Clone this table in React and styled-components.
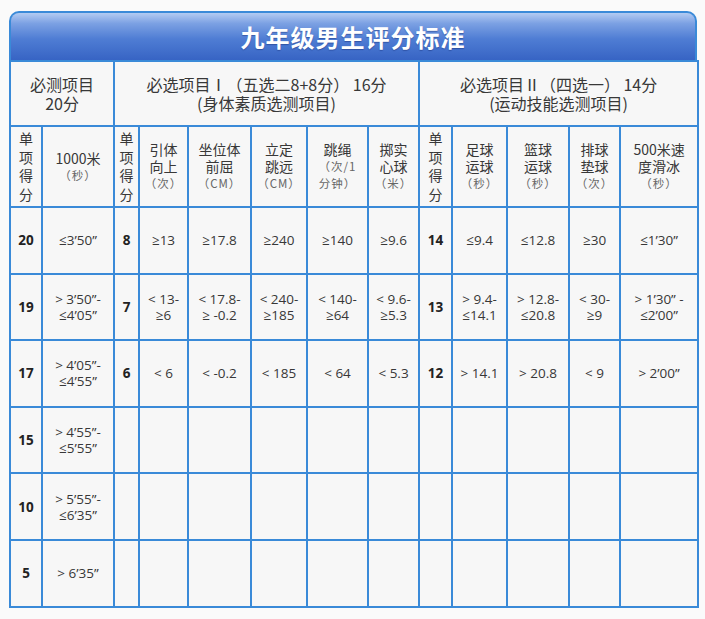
import React from 'react';
import styled, { createGlobalStyle } from 'styled-components';

const GlobalStyle = createGlobalStyle`
    html, body {
        margin: 0;
        padding: 0;
        background: #fafafa;
    }
`;

const LINE = '#3a8ad8';

const cols = [32, 72, 25, 49, 63, 56, 61, 51, 33, 55, 62, 51, 78];

const subHeads = [
    { kind: 'score' },
    { name: ['1000米'], unit: '（秒）' },
    { kind: 'score' },
    { name: ['引体', '向上'], unit: '（次）' },
    { name: ['坐位体', '前屈'], unit: '（CM）' },
    { name: ['立定', '跳远'], unit: '（CM）' },
    { name: ['跳绳'], unit: ['（次/1', '分钟）'] },
    { name: ['掷实', '心球'], unit: '（米）' },
    { kind: 'score' },
    { name: ['足球', '运球'], unit: '（秒）' },
    { name: ['篮球', '运球'], unit: '（秒）' },
    { name: ['排球', '垫球'], unit: '（次）' },
    { name: ['500米速', '度滑冰'], unit: '（秒）' },
];

const rows = [
    ['20', ['≤3’50”'], '8', ['≥13'], ['≥17.8'], ['≥240'], ['≥140'], ['≥9.6'], '14', ['≤9.4'], ['≤12.8'], ['≥30'], ['≤1’30”']],
    ['19', ['> 3’50”-', '≤4’05”'], '7', ['< 13-', '≥6'], ['< 17.8-', '≥ -0.2'], ['< 240-', '≥185'], ['< 140-', '≥64'], ['< 9.6-', '≥5.3'], '13', ['> 9.4-', '≤14.1'], ['> 12.8-', '≤20.8'], ['< 30-', '≥9'], ['> 1’30”  -', '≤2’00”']],
    ['17', ['> 4’05”-', '≤4’55”'], '6', ['< 6'], ['< -0.2'], ['< 185'], ['< 64'], ['< 5.3'], '12', ['> 14.1'], ['> 20.8'], ['< 9'], ['> 2’00”']],
    ['15', ['> 4’55”-', '≤5’55”'], '', [], [], [], [], [], '', [], [], [], []],
    ['10', ['> 5’55”-', '≤6’35”'], '', [], [], [], [], [], '', [], [], [], []],
    ['5', ['> 6’35”'], '', [], [], [], [], [], '', [], [], [], []],
];

const scoreCols = [0, 2, 8];

const Page = styled.div`
    padding: 11px 0 0 9px;
`;

const Card = styled.div`
    width: 688px;
`;

const Title = styled.div`
    height: 47px;
    border: 2px solid ${LINE};
    border-bottom: none;
    border-radius: 10px 10px 0 0;
    background: linear-gradient(to bottom, #b3cbf2 0%, #7ca1e3 22%, #4f7dd4 55%, #3764c4 100%);
    display: flex;
    align-items: center;
    justify-content: center;
    color: #fff;
    font-family: "Noto Sans CJK SC", sans-serif;
    font-weight: 700;
    font-size: 24px;
    letter-spacing: 1px;
    text-shadow: 0 1px 1px rgba(20, 40, 110, 0.45);
`;

const Table = styled.table`
    width: 688px;
    table-layout: fixed;
    border-collapse: collapse;
    background: #f7f7f7;
    color: #383838;
`;

const Cell = styled.td`
    border: 2px solid ${LINE};
    padding: 0;
    text-align: center;
    vertical-align: middle;
    white-space: nowrap;
`;

const GroupHead = styled(Cell)`
    height: 63px;
    font-family: "Noto Sans CJK SC", sans-serif;
    font-size: 16px;
    line-height: 19px;
`;

const SubHead = styled(Cell)`
    height: 77px;
    font-family: "Noto Sans CJK SC", sans-serif;
    font-size: 14px;
    line-height: 17px;
`;

const ScoreHead = styled(SubHead)`
    line-height: 18.5px;
    vertical-align: top;
    padding-top: 2px;
`;

const Unit = styled.div`
    color: #666;
    font-size: 11.5px;
    letter-spacing: 1px;
`;

const DataCell = styled(Cell)`
    height: 64.6px;
    font-family: "Open Sans", "Noto Sans", sans-serif;
    font-size: 13.5px;
    line-height: 16px;
    font-weight: ${p => (p.$score ? 700 : 400)};
    color: ${p => (p.$score ? '#222' : '#383838')};
`;

const Lines = ({ items }) => items.map((t, i) => <div key={i}>{t}</div>);

export default function App() {
    return (
        <>
            <GlobalStyle />
            <Page>
                <Card>
                    <Title>九年级男生评分标准</Title>
                    <Table>
                        <colgroup>
                            {cols.map((w, i) => <col key={i} style={{ width: w }} />)}
                        </colgroup>
                        <tbody>
                            <tr>
                                <GroupHead colSpan={2}>
                                    <div>必测项目</div>
                                    <div>20分</div>
                                </GroupHead>
                                <GroupHead colSpan={6}>
                                    <div>必选项目Ⅰ（五选二8+8分） 16分</div>
                                    <div>(身体素质选测项目)</div>
                                </GroupHead>
                                <GroupHead colSpan={5}>
                                    <div>必选项目Ⅱ（四选一） 14分</div>
                                    <div>(运动技能选测项目)</div>
                                </GroupHead>
                            </tr>
                            <tr>
                                {subHeads.map((h, i) =>
                                    h.kind === 'score' ? (
                                        <ScoreHead key={i}>
                                            <Lines items={['单', '项', '得', '分']} />
                                        </ScoreHead>
                                    ) : (
                                        <SubHead key={i}>
                                            <Lines items={h.name} />
                                            {Array.isArray(h.unit)
                                                ? h.unit.map((u, j) => <Unit key={j}>{u}</Unit>)
                                                : <Unit>{h.unit}</Unit>}
                                        </SubHead>
                                    )
                                )}
                            </tr>
                            {rows.map((r, ri) => (
                                <tr key={ri}>
                                    {r.map((c, ci) => (
                                        <DataCell key={ci} $score={scoreCols.includes(ci)}>
                                            {Array.isArray(c) ? <Lines items={c} /> : c}
                                        </DataCell>
                                    ))}
                                </tr>
                            ))}
                        </tbody>
                    </Table>
                </Card>
            </Page>
        </>
    );
}
